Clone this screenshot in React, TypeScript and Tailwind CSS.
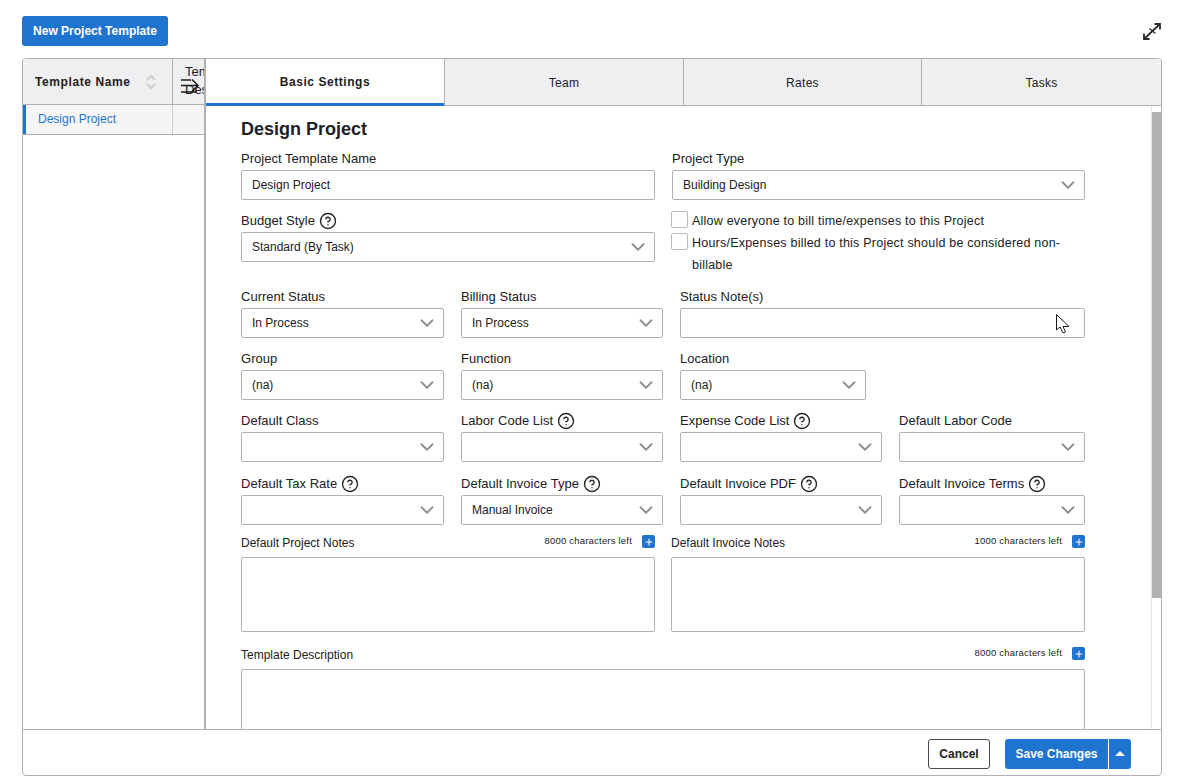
import { ChevronDown, CircleHelp, Plus } from 'lucide-react';

const tabs = [
  { name: 'Basic Settings', width: 'w-[238px]' },
  { name: 'Team', width: 'w-[239px]' },
  { name: 'Rates', width: 'w-[238px]' },
  { name: 'Tasks', width: 'flex-1' },
];

function Label({ text, help }: { text: string; help?: boolean }) {
  return (
    <div className="flex items-center h-[18px] mb-[2px] text-[13px] leading-[18px] tracking-[0.02px] text-[#212121]">
      <span>{text}</span>
      {help && <CircleHelp size={18} strokeWidth={1.8} className="ml-[4px] text-[#212121]" />}
    </div>
  );
}

function Select({ label, value, help }: { label: string; value?: string; help?: boolean }) {
  return (
    <div>
      <Label text={label} help={help} />
      <div className="flex items-center justify-between h-[30px] pl-[10px] pr-[5px] bg-white border border-[#b1b1b1] rounded-[2px] text-xs text-[#212121]">
        <span>{value}</span>
        <ChevronDown size={22} strokeWidth={2} className="text-[#8f8f8f]" />
      </div>
    </div>
  );
}

function TextField({ label, value }: { label: string; value?: string }) {
  return (
    <div>
      <Label text={label} />
      <div className="flex items-center h-[30px] pl-[10px] bg-white border border-[#b1b1b1] rounded-[2px] text-xs text-[#212121]">
        {value}
      </div>
    </div>
  );
}

function Notes({ label, left, height }: { label: string; left: string; height: string }) {
  return (
    <div>
      <div className="flex items-center justify-between h-[18px] mb-[5px] text-xs text-[#212121]">
        <span>{label}</span>
        <span className="flex items-center pb-[3px] text-[9.5px] tracking-[0.2px]">
          {left}
          <span className="grid place-items-center w-[13px] h-[13px] ml-[10px] rounded-[2px] bg-[#1f74d0] text-white">
            <Plus size={10} strokeWidth={2.5} />
          </span>
        </span>
      </div>
      <div className={`${height} bg-white border border-[#b1b1b1] rounded-[2px]`} />
    </div>
  );
}

function Check({ text }: { text: string }) {
  return (
    <div className="flex text-[12.5px] leading-[22px] tracking-[0.22px] text-[#212121]">
      <span className="shrink-0 w-[17px] h-[17px] mt-[1px] mr-[4px] bg-white border border-[#b9b9b9] rounded-[2px]" />
      <span>{text}</span>
    </div>
  );
}

export default function App() {
  return (
    <div className="relative h-[782px] w-[1185px] overflow-hidden bg-white font-['Liberation_Sans',Arial,sans-serif]">
      <div className="flex items-center justify-between pl-[22px] pr-[23px] pt-4">
        <button className="h-[30px] w-[146px] rounded-[3px] bg-[#1f74d0] text-xs font-bold text-white">
          New Project Template
        </button>
        <svg width="20" height="20" viewBox="0 0 20 20" fill="none" stroke="#2b2b2b" strokeWidth="1.8">
          <path d="M2 18 18 3M12.500 3H18v5.500M2 12.500V18h5.500" />
          <path d="M7.500 7.500l6 5" strokeWidth="1.2" />
        </svg>
      </div>

      <div className="ml-[22px] mt-3 flex h-[718px] w-[1140px] flex-col overflow-hidden rounded-[4px] border border-[#b1b1b1]">
        <div className="flex min-h-0 flex-1">
          {/* template list */}
          <div className="relative w-[181px] shrink-0 overflow-hidden">
            <div className="flex h-[46px] border-b border-[#b1b1b1] bg-[#efeff1]">
              <div className="flex w-[150px] shrink-0 items-center justify-between border-r border-[#b1b1b1] pl-3 pr-[15px] text-xs font-bold tracking-[0.6px] text-[#212121]">
                Template Name
                <svg width="12" height="18" viewBox="0 0 12 18" fill="none" stroke="#cfcfcf" strokeWidth="2">
                  <path d="M2 7l4-4 4 4M2 11l4 4 4-4" />
                </svg>
              </div>
              <div className="pl-3 pt-[4px] text-[13px] leading-[18px] text-[#212121]">
                Template Description
              </div>
            </div>
            <svg className="absolute left-[157px] top-[18px]" width="20" height="18" viewBox="0 0 20 18" fill="none" stroke="#1c1c1c" strokeWidth="1.6">
              <path d="M1 3h10M1 8.500h17M1 15h16M12 2.500l6 6-6 6" />
            </svg>
            <div className="flex h-[30px] border-b border-[#b1b1b1] bg-[#f5f5f6]">
              <div className="flex w-[150px] shrink-0 items-center border-r border-[#d0d0d0] border-l-[3px] border-l-[#1f74d0] pb-[2px] pl-3 text-xs text-[#1f74d0]">
                Design Project
              </div>
            </div>
          </div>

          <div className="w-[2px] shrink-0 bg-[#b1b1b1]" />

          <div className="flex min-w-0 flex-1 flex-col">
            <div className="flex h-[47px] shrink-0">
              {tabs.map((t, i) => (
                <div
                  key={t.name}
                  className={`flex items-center justify-center pt-[2px] text-xs text-[#212121] ${t.width} ${
                    i === 0
                      ? 'border-b-[3px] border-b-[#1f74d0] bg-white font-bold tracking-[0.55px]'
                      : 'border-b border-b-[#b1b1b1] border-l border-l-[#b1b1b1] bg-[#efeff1] tracking-[0.3px]'
                  }`}
                >
                  {t.name}
                </div>
              ))}
            </div>

            <div className="flex min-h-0 flex-1">
              <div className="min-w-0 flex-1 overflow-hidden pl-[35px] pr-[66px]">
                <h2 className="mt-[13px] h-[20px] text-lg font-bold leading-[20px] text-[#212121]">Design Project</h2>
                <div className="mt-[11px] grid grid-cols-[414px_414px] gap-x-[16px]">
                  <div>
                    <TextField label="Project Template Name" value="Design Project" />
                    <div className="mt-[12px]">
                      <Select label="Budget Style" value="Standard (By Task)" help />
                    </div>
                  </div>
                  <div>
                    <div className="pl-px">
                      <Select label="Project Type" value="Building Design" />
                    </div>
                    <div className="mt-[10px]">
                      <Check text="Allow everyone to bill time/expenses to this Project" />
                      <Check text="Hours/Expenses billed to this Project should be considered non-billable" />
                    </div>
                  </div>
                </div>

                <div className="mt-[12px] grid grid-cols-[203px_202px_405px] gap-x-[17px]">
                  <Select label="Current Status" value="In Process" />
                  <Select label="Billing Status" value="In Process" />
                  <TextField label="Status Note(s)" />
                </div>
                <div className="mt-[12px] grid grid-cols-[203px_202px_186px] gap-x-[17px]">
                  <Select label="Group" value="(na)" />
                  <Select label="Function" value="(na)" />
                  <Select label="Location" value="(na)" />
                </div>
                <div className="mt-[12px] grid grid-cols-[203px_202px_202px_186px] gap-x-[17px]">
                  <Select label="Default Class" />
                  <Select label="Labor Code List" help />
                  <Select label="Expense Code List" help />
                  <Select label="Default Labor Code" />
                </div>
                <div className="mt-[13px] grid grid-cols-[203px_202px_202px_186px] gap-x-[17px]">
                  <Select label="Default Tax Rate" help />
                  <Select label="Default Invoice Type" value="Manual Invoice" help />
                  <Select label="Default Invoice PDF" help />
                  <Select label="Default Invoice Terms" help />
                </div>
                <div className="mt-[9px] grid grid-cols-[414px_414px] gap-x-[16px]">
                  <Notes label="Default Project Notes" left="8000 characters left" height="h-[75px]" />
                  <Notes label="Default Invoice Notes" left="1000 characters left" height="h-[75px]" />
                </div>
                <div className="mt-[14px]">
                  <Notes label="Template Description" left="8000 characters left" height="h-[75px]" />
                </div>
              </div>
              <div className="w-[10px] shrink-0 border-l border-[#e6e6e6] pt-[6px]">
                <div className="h-[486px] bg-[#b1b1b1]" />
              </div>
            </div>
          </div>
        </div>

        <div className="flex h-[46px] shrink-0 items-center justify-end border-t border-[#b1b1b1] pr-[30px] pt-[2px]">
          <button className="h-[30px] w-[62px] rounded-[3px] border border-[#4a4a4a] bg-white text-xs font-bold text-[#212121]">
            Cancel
          </button>
          <button className="ml-[15px] h-[30px] w-[103px] rounded-l-[3px] bg-[#1f74d0] text-xs font-bold text-white">
            Save Changes
          </button>
          <button className="ml-px grid h-[30px] w-[22px] place-items-center rounded-r-[3px] bg-[#1f74d0]">
            <span className="h-0 w-0 border-x-[5px] border-b-[5px] border-x-transparent border-b-white" />
          </button>
        </div>
      </div>

      <svg className="absolute left-[1055px] top-[313px]" width="16" height="22" viewBox="0 0 16 22" fill="white" stroke="#1a1a1a" strokeWidth="1">
        <path d="M1.500 1.500V17L5 14l3 6 2.500-1-2.500-5.500h6z" />
      </svg>
    </div>
  );
}
